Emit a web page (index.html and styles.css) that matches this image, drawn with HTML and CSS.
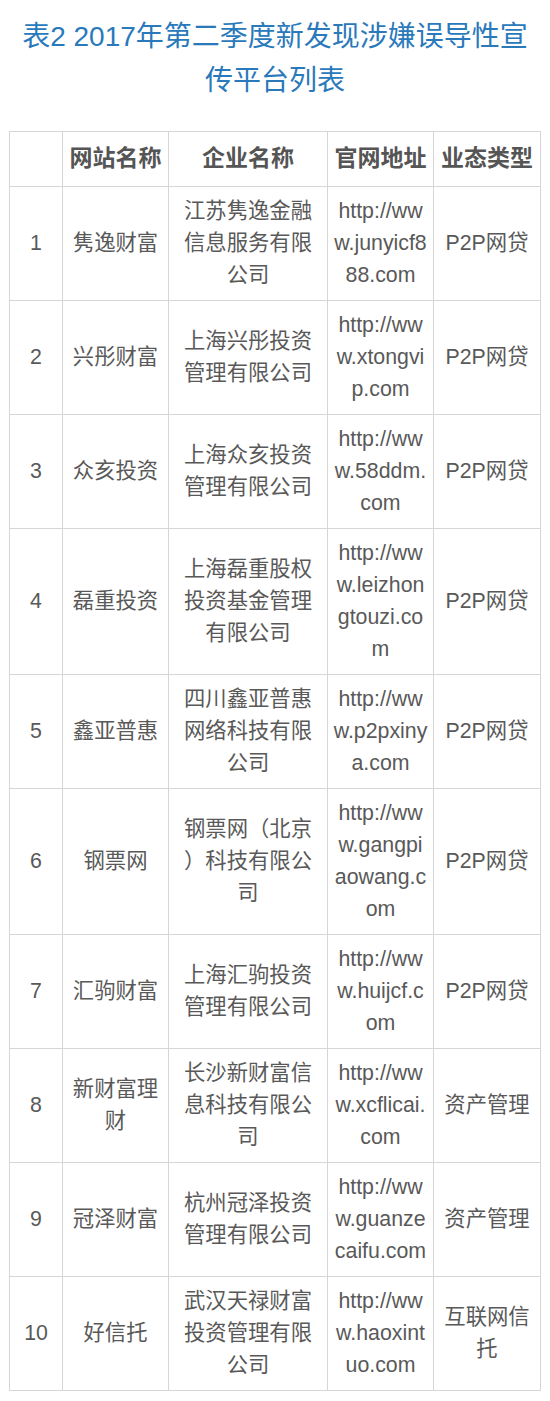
FILE: index.html
```html
<!DOCTYPE html>
<html lang="zh-CN">
<head>
<meta charset="utf-8">
<title>表2 2017年第二季度新发现涉嫌误导性宣传平台列表</title>
<link rel="stylesheet" href="styles.css">
</head>
<body>
<main class="page">
  <h1 class="title">表2 2017年第二季度新发现涉嫌误导性宣传平台列表</h1>
  <table class="list">
    <colgroup>
      <col class="c-no">
      <col class="c-site">
      <col class="c-corp">
      <col class="c-url">
      <col class="c-type">
    </colgroup>
    <thead>
      <tr>
        <th></th>
        <th>网站名称</th>
        <th>企业名称</th>
        <th>官网地址</th>
        <th>业态类型</th>
      </tr>
    </thead>
    <tbody>
      <tr><td>1</td><td>隽逸财富</td><td>江苏隽逸金融信息服务有限公司</td><td class="url">http://www.junyicf888.com</td><td>P2P网贷</td></tr>
      <tr><td>2</td><td>兴彤财富</td><td>上海兴彤投资管理有限公司</td><td class="url">http://www.xtongvip.com</td><td>P2P网贷</td></tr>
      <tr><td>3</td><td>众亥投资</td><td>上海众亥投资管理有限公司</td><td class="url">http://www.58ddm.com</td><td>P2P网贷</td></tr>
      <tr><td>4</td><td>磊重投资</td><td>上海磊重股权投资基金管理有限公司</td><td class="url">http://www.leizhongtouzi.com</td><td>P2P网贷</td></tr>
      <tr><td>5</td><td>鑫亚普惠</td><td>四川鑫亚普惠网络科技有限公司</td><td class="url">http://www.p2pxinya.com</td><td>P2P网贷</td></tr>
      <tr><td>6</td><td>钢票网</td><td>钢票网（北京）科技有限公司</td><td class="url">http://www.gangpiaowang.com</td><td>P2P网贷</td></tr>
      <tr><td>7</td><td>汇驹财富</td><td>上海汇驹投资管理有限公司</td><td class="url">http://www.huijcf.com</td><td>P2P网贷</td></tr>
      <tr><td>8</td><td>新财富理财</td><td>长沙新财富信息科技有限公司</td><td class="url">http://www.xcflicai.com</td><td>资产管理</td></tr>
      <tr><td>9</td><td>冠泽财富</td><td>杭州冠泽投资管理有限公司</td><td class="url">http://www.guanzecaifu.com</td><td>资产管理</td></tr>
      <tr><td>10</td><td>好信托</td><td>武汉天禄财富投资管理有限公司</td><td class="url">http://www.haoxintuo.com</td><td>互联网信托</td></tr>
    </tbody>
  </table>
</main>
</body>
</html>
```
FILE: styles.css
```css
html, body {
  margin: 0;
  padding: 0;
  background: #ffffff;
}

body {
  font-family: "Liberation Sans", "Noto Sans CJK SC", sans-serif;
  color: #595959;
}

.page {
  padding: 15px 0 0;
}

.title {
  margin: 0 0 28.5px;
  padding: 0 15px;
  font-size: 28px;
  line-height: 43.5px;
  font-weight: normal;
  color: #2a79ba;
  text-align: center;
}

.list {
  margin-left: 9px;
  width: 531px;
  table-layout: fixed;
  border-collapse: collapse;
}

.c-no { width: 53px; }
.c-site { width: 106px; }
.c-corp { width: 159px; }
.c-url { width: 106px; }
.c-type { width: 107px; }

.list th,
.list td {
  border: 1px solid #d6d6d6;
  text-align: center;
  vertical-align: middle;
  line-break: anywhere;
  word-break: break-all;
  text-spacing-trim: space-all;
}

.list th {
  padding: 8.5px 4px;
  font-size: 23px;
  line-height: 37px;
  font-weight: bold;
  color: #555555;
}

.list td {
  padding: 8.5px 8px;
  font-size: 21.333px;
  line-height: 32px;
  color: #595959;
}

.list td.url {
  padding-left: 4.5px;
  padding-right: 4.5px;
}
```
